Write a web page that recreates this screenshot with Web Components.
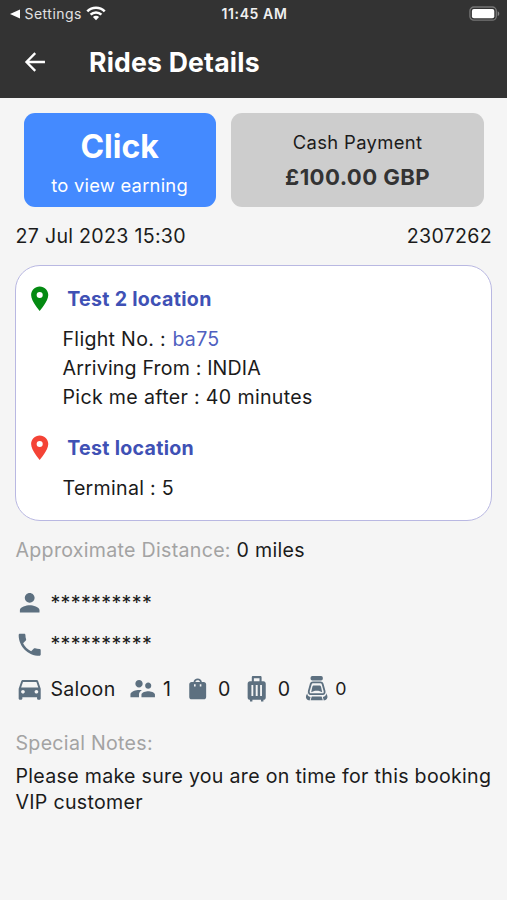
<!DOCTYPE html>
<html lang="en">
<head>
<meta charset="utf-8">
<title>Rides Details</title>
<style>
body{margin:0;background:#f5f5f5;color:#1b1b1b;font:400 19.6px/26px Inter,sans-serif;letter-spacing:.29px}
</style>
</head>
<body>
<ride-screen></ride-screen>
<script>
const define = (name, html) => customElements.define(name, class extends HTMLElement {
  connectedCallback() {
    if (this.shadowRoot) return;
    const t = document.createElement('template');
    t.innerHTML = html;
    this.attachShadow({mode: 'open'}).append(t.content.cloneNode(true));
  }
});

const ICONS = {
  pin: '<path fill-rule="evenodd" d="M12 2C8.13 2 5 5.13 5 9c0 5.25 7 13 7 13s7-7.75 7-13c0-3.87-3.13-7-7-7zm0 9.5a2.5 2.5 0 1 1 0-5 2.5 2.5 0 0 1 0 5z"/>',
  person: '<path d="M12 12c2.21 0 4-1.79 4-4s-1.79-4-4-4-4 1.79-4 4 1.79 4 4 4zm0 2c-2.67 0-8 1.34-8 4v2h16v-2c0-2.66-5.33-4-8-4z"/>',
  phone: '<path d="M6.62 10.79c1.44 2.83 3.76 5.14 6.59 6.59l2.2-2.2c.27-.27.67-.36 1.02-.24 1.12.37 2.33.57 3.57.57.55 0 1 .45 1 1V20c0 .55-.45 1-1 1C10.61 21 3 13.39 3 4c0-.55.45-1 1-1h3.5c.55 0 1 .45 1 1 0 1.25.2 2.45.57 3.57.11.35.03.74-.25 1.02l-2.2 2.2z"/>',
  car: '<path d="M18.92 6.01C18.72 5.42 18.16 5 17.5 5h-11c-.66 0-1.21.42-1.42 1.01L3 12v8c0 .55.45 1 1 1h1c.55 0 1-.45 1-1v-1h12v1c0 .55.45 1 1 1h1c.55 0 1-.45 1-1v-8l-2.08-5.99zM6.5 16c-.83 0-1.5-.67-1.5-1.5S5.67 13 6.5 13s1.5.67 1.5 1.5S7.33 16 6.5 16zm11 0c-.83 0-1.5-.67-1.5-1.5s.67-1.5 1.5-1.5 1.5.67 1.5 1.5-.67 1.5-1.5 1.5zM5 11l1.5-4.5h11L19 11H5z"/>',
  people: '<path d="M16.5 12c1.38 0 2.49-1.12 2.49-2.5S17.88 7 16.5 7 14 8.12 14 9.5s1.12 2.5 2.5 2.5zM9 11c1.66 0 2.99-1.34 2.99-3S10.66 5 9 5 6 6.34 6 8s1.34 3 3 3zm7.5 3c-1.83 0-5.5.92-5.5 2.75V19h11v-2.25c0-1.83-3.67-2.75-5.5-2.75zM9 13c-2.33 0-7 1.17-7 3.5V19h7v-2.25c0-.85.33-2.34 2.37-3.47C10.5 13.1 9.66 13 9 13z"/>',
  bag: '<path fill-rule="evenodd" d="M7 6.5h1.6C8.8 4.8 10.2 3.6 12 3.6s3.2 1.2 3.4 2.9H17c1.1 0 1.9.8 1.9 1.9v10.3c0 1.1-.8 1.9-1.9 1.9H7c-1.1 0-1.9-.8-1.9-1.9V8.400C5.100 7.300 5.900 6.500 7 6.500zm3.100 0h3.800C13.700 5.600 13 5.100 12 5.100s-1.700.5-1.900 1.400zM9 8.300v2h1.300v-2zm4.700 0v2H15v-2z"/>',
  suitcase: '<path fill-rule="evenodd" d="M9 1.700h6c.6 0 1 .4 1 1V6h1.500C18.600 6 19.400 6.800 19.400 7.900v11.200c0 1.100-.8 1.900-1.900 1.900v1.400h-2V21h-7v1.400h-2V21c-1.100 0-1.900-.8-1.900-1.900V7.900C4.600 6.800 5.400 6 6.500 6H8V2.700c0-.6.4-1 1-1zM9.700 3.400V6h4.600V3.400zM7.700 9v9h1.500V9zm3.500 0v9h1.600V9zm3.600 0v9h1.500V9z"/>',
  seat: '<rect x="7" y="1.600" width="10" height="3.700" rx="1.400"/><path d="M8.900 6.900h6.200c1 0 1.500.5 1.800 1.400l1.500 5.500c.3 1.200-.2 2.600-1.500 2.600H7.100c-1.300 0-1.800-1.400-1.500-2.600l1.500-5.500c.3-.9.800-1.400 1.800-1.400z" fill="none" stroke="currentColor" stroke-width="1.500"/><path d="M9.800 9.300h4.400c.7 0 1.100.4 1.300 1l1 4.600c-1.200-.9-2.600-1.300-4.500-1.300s-3.300.4-4.500 1.300l1-4.600c.2-.6.600-1 1.300-1zM8 18.300h8l1 3.100H7z"/><path d="M4.300 15.800c0 2 .8 2.700 2.700 3l-.8 2.900c-2.200-.4-3.400-1.800-2.900-4zM19.700 15.800c0 2-.8 2.700-2.700 3l.8 2.900c2.200-.4 3.400-1.800 2.900-4z"/>',
  back: '<path d="M21.200 12H4.500M12.200 3.800 4.100 12l8.100 8.200" fill="none" stroke="currentColor" stroke-width="2.100"/>'
};
customElements.define('ui-icon', class extends HTMLElement {
  connectedCallback() {
    if (this.shadowRoot) return;
    this.attachShadow({mode: 'open'}).innerHTML = `<style>
      :host{display:block;flex:none;width:29.4px;height:29.4px;color:#5d7080}
      svg{display:block;width:100%;height:100%;fill:currentColor}
      </style><svg viewBox="0 0 24 24">${ICONS[this.getAttribute('name')]}</svg>`;
  }
});

define('status-bar', `<style>
  :host{display:grid;grid-template-columns:1fr auto 1fr;align-items:center;height:28px;padding:0 7px 0 10px;font-size:14px;line-height:28px}
  .left{display:flex;align-items:center;color:#e2e2e2;letter-spacing:.48px}
  .left svg:first-child{margin-right:4.5px}
  .wifi{margin-left:4.5px;margin-bottom:2px}
  .time{font-weight:600;letter-spacing:.6px;color:#f0f0f0;padding-right:1px}
  .battery{justify-self:end;margin-bottom:1px}
  svg{display:block}
  </style>
  <div class="left"><svg width="10" height="10"><path d="M0 5 10 .5v9z" fill="#fff"/></svg>Settings<svg class="wifi" width="20" height="16" viewBox="0 0 20 16"><g fill="none" stroke="#fff" stroke-width="2.6"><path d="M1.3 6.3a12.3 12.3 0 0 1 17.4 0"/><path d="M4.6 9.7a7.6 7.6 0 0 1 10.8 0"/></g><path d="M10 15.2 6.900 12a4.400 4.400 0 0 1 6.200 0z" fill="#fff"/></svg></div>
  <div class="time">11:45 AM</div>
  <svg class="battery" width="31" height="16"><rect x=".9" y="1" width="26.4" height="13.2" rx="4" fill="none" stroke="#767676" stroke-width="1.3"/><rect x="2.9" y="3" width="22.4" height="9.2" rx="2" fill="#fff"/><path d="M28.7 5.2c2.1.8 2.1 4 0 4.8z" fill="#858585"/></svg>`);

define('app-header', `<style>
  :host{display:block;height:98px;background:#333;color:#fff}
  .bar{display:flex;align-items:center;height:68px;padding-left:22px}
  ui-icon{color:#fff;width:26px;height:26px}
  .title{margin-left:41px;font-size:26.6px;font-weight:700;letter-spacing:.2px;padding-bottom:1px}
  </style><status-bar></status-bar><div class="bar"><ui-icon name="back"></ui-icon><div class="title"><slot></slot></div></div>`);

define('info-card', `<style>
  :host{display:flex;flex-direction:column;align-items:center;box-sizing:border-box;height:94px;border-radius:11px}
  :host([kind=click]){width:192px;background:#448aff;color:#fff;padding-top:14px;font-size:18.4px;letter-spacing:.22px}
  :host([kind=cash]){width:253px;background:#cdcdcd;padding-top:16px;font-size:18.4px;letter-spacing:.35px}
  ::slotted(b){display:block;font-weight:700}
  :host([kind=click]) ::slotted(b){font-size:32px;line-height:40px;letter-spacing:0}
  :host([kind=click]) ::slotted(span){line-height:36px}
  :host([kind=cash]) ::slotted(b){font-size:22.2px;line-height:43px;letter-spacing:.4px;color:#333}
  </style><slot></slot>`);

define('place-stop', `<style>
  :host{display:block}
  .head{display:flex;align-items:center;height:30px;padding-left:9.2px;color:#3f51b5;font-weight:700}
  ui-icon{color:var(--pin)}
  .name{margin-left:12.6px}
  .details{padding:10.7px 0 0 46.5px;line-height:29.3px}
  </style><div class="head"><ui-icon name="pin"></ui-icon><div class="name"><slot name="name"></slot></div></div><div class="details"><slot></slot></div>`);

define('route-box', `<style>
  :host{display:block;box-sizing:border-box;height:256px;margin:0 15px 1px;padding-top:18px;border:1.5px solid #b9b8e2;border-radius:25px;background:#fff}
  </style><slot></slot>`);

customElements.define('spec-item', class extends HTMLElement {
  connectedCallback() {
    if (this.shadowRoot) return;
    this.attachShadow({mode: 'open'}).innerHTML = `<style>
      :host{display:flex;align-items:center;flex:none}
      .text{margin-left:6px}
      :host([small]) .text{font-size:17.8px;margin-left:4px}
      </style><ui-icon name="${this.getAttribute('icon')}"></ui-icon><div class="text"><slot></slot></div>`;
  }
});

define('ride-screen', `<style>
  :host{display:block;height:900px;overflow:hidden}
  .cards{display:flex;gap:15.5px;padding:15px 0 0 23.6px}
  .meta{display:flex;justify-content:space-between;padding:16px 15px 0 15.5px;height:42px}
  .stop2{margin-top:20.4px}
  .link{color:#4f5fc0;margin-left:.7px}
  .grey{color:#a3a3a3}
  .distance{padding:15px 15.5px 0;height:45px}
  .contact,.specs{display:flex;align-items:center;padding-left:15px;height:41.5px}
  .specs{height:48px}
  .stars{letter-spacing:.35px}
  .pax{margin-left:12px}.bags{margin-left:11.5px}.cases{margin-left:11.5px}.seats{margin-left:11.5px}
  .notes{padding:17px 10px 0 15.5px}
  .notes p{margin:7px 0 0}
  </style>
  <app-header>Rides Details</app-header>
  <div class="cards">
    <info-card kind="click"><b>Click</b><span>to view earning</span></info-card>
    <info-card kind="cash"><span>Cash Payment</span><b>£100.00 GBP</b></info-card>
  </div>
  <div class="meta"><span>27 Jul 2023 15:30</span><span>2307262</span></div>
  <route-box>
    <place-stop style="--pin:#048a12"><span slot="name">Test 2 location</span><div>Flight No. : <span class="link">ba75</span></div><div style="letter-spacing:.16px">Arriving From : INDIA</div><div style="letter-spacing:.33px">Pick me after : 40 minutes</div></place-stop>
    <place-stop class="stop2" style="--pin:#f44336"><span slot="name">Test location</span><div>Terminal : 5</div></place-stop>
  </route-box>
  <div class="distance"><span class="grey">Approximate Distance:</span> 0 miles</div>
  <div class="contact"><spec-item icon="person" class="stars">**********</spec-item></div>
  <div class="contact"><spec-item icon="phone" class="stars">**********</spec-item></div>
  <div class="specs"><spec-item icon="car">Saloon</spec-item><spec-item class="pax" icon="people">1</spec-item><spec-item class="bags" icon="bag">0</spec-item><spec-item class="cases" icon="suitcase">0</spec-item><spec-item class="seats" icon="seat" small>0</spec-item></div>
  <div class="notes"><div class="grey">Special Notes:</div><p>Please make sure you are on time for this booking<br>VIP customer</p></div>`);
</script>
</body>
</html>
